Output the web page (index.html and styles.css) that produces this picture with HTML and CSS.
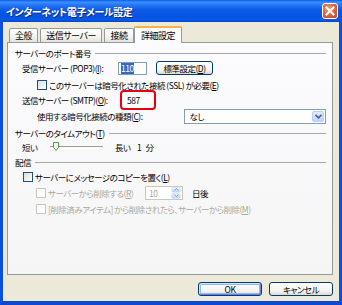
FILE: index.html
```html
<!DOCTYPE html>
<html lang="ja">
<head>
    <meta charset="UTF-8">
    <title>インターネット電子メール設定</title>
    <link rel="stylesheet" href="styles.css">
</head>
<body>
    <div class="window">
        <div class="titlebar">
            <span class="title">インターネット電子メール設定</span>
            <span class="close">
                <svg width="10" height="10" viewBox="0 0 10 10"><path d="M1.5 1.5 L8.5 8.5 M8.5 1.5 L1.5 8.5" stroke="#fff" stroke-width="2" stroke-linecap="square"/></svg>
            </span>
        </div>
        <div class="frame">
            <div class="tabs">
                <div class="tab t1">全般</div>
                <div class="tab t2">送信サーバー</div>
                <div class="tab t3">接続</div>
                <div class="tab t4 active">詳細設定</div>
            </div>
            <div class="panel">
                <div class="group-head"><span>サーバーのポート番号</span></div>
                <div class="row pop3">
                    <span class="label port">受信サーバー (POP3)(<u>I</u>):</span>
                    <span class="field port-field"><span class="selected">110</span></span>
                    <span class="btn std">標準設定(<u>D</u>)</span>
                </div>
                <div class="row ssl">
                    <span class="check"></span>
                    <span>このサーバーは暗号化された接続 (SSL) が必要(<u>E</u>)</span>
                </div>
                <div class="row smtp">
                    <span class="label port">送信サーバー (SMTP)(<u>O</u>):</span>
                    <span class="mark"><span class="field smtp-field">587</span></span>
                </div>
                <div class="row enc">
                    <span class="label enc-label">使用する暗号化接続の種類(<u>C</u>):</span>
                    <span class="field select">
                        <span class="select-text">なし</span>
                        <span class="drop">
                            <svg width="7" height="5" viewBox="0 0 7 5"><path d="M0.5 0.8 L3.5 3.8 L6.5 0.8" fill="none" stroke="#4d6185" stroke-width="1.6"/></svg>
                        </span>
                    </span>
                </div>
                <div class="group-head head2"><span>サーバーのタイムアウト(<u>T</u>)</span></div>
                <div class="row timeout">
                    <span class="short">短い</span>
                    <span class="slider">
                        <span class="track"></span>
                        <svg class="thumb" width="6" height="9" viewBox="0 0 6 9"><path d="M0.5 0.5 H5.5 V5.5 L3 8.5 L0.5 5.5 Z" fill="#f4f4ee" stroke="#4aa34a"/></svg>
                    </span>
                    <span class="long">長い</span>
                    <span class="value">1 分</span>
                </div>
                <div class="group-head head3"><span>配信</span></div>
                <div class="row copy">
                    <span class="check"></span>
                    <span>サーバーにメッセージのコピーを置く(<u>L</u>)</span>
                </div>
                <div class="row delete disabled">
                    <span class="check"></span>
                    <span class="del-label">サーバーから削除する(<u>R</u>)</span>
                    <span class="field spin">
                        <span class="spin-text">10</span>
                        <span class="spin-btns">
                            <span class="spin-btn"><svg width="5" height="3" viewBox="0 0 5 3"><path d="M0.5 2.5 L2.5 0.5 L4.5 2.5" fill="none" stroke="#8ea4cc"/></svg></span>
                            <span class="spin-btn"><svg width="5" height="3" viewBox="0 0 5 3"><path d="M0.5 0.5 L2.5 2.5 L4.5 0.5" fill="none" stroke="#8ea4cc"/></svg></span>
                        </span>
                    </span>
                    <span class="days">日後</span>
                </div>
                <div class="row deleted disabled">
                    <span class="check"></span>
                    <span>[削除済みアイテム] から削除されたら、サーバーから削除(<u>M</u>)</span>
                </div>
            </div>
            <div class="actions">
                <span class="btn ok">OK</span>
                <span class="btn">キャンセル</span>
            </div>
        </div>
    </div>
</body>
</html>
```

FILE: styles.css
```css
body {
    margin: 0;
    font-family: "Noto Sans CJK JP", sans-serif;
    font-size: 8.5px;
    letter-spacing: -0.5px;
    font-feature-settings: "palt";
    color: #000;
}

.window {
    width: 342px;
    height: 305px;
    display: flex;
    flex-direction: column;
}

.titlebar {
    height: 22px;
    flex: none;
    display: flex;
    align-items: center;
    padding: 0 4px 0 6px;
    background: linear-gradient(to bottom, #0a5ee8 0%, #3d8fff 10%, #2a7af6 20%, #0b5ae6 45%, #0553e0 75%, #0a58e8 90%, #0046c8 100%);
}

.title {
    flex: 1;
    color: #fff;
    font-weight: bold;
    font-size: 10px;
    letter-spacing: -0.4px;
    text-shadow: 1px 1px #0c2a8c;
}

.close {
    width: 14px;
    height: 14px;
    border: 1px solid #fff;
    border-radius: 3px;
    background: radial-gradient(circle at 40% 35%, #f0a080 0%, #e0643c 50%, #c2401c 100%);
    display: flex;
    align-items: center;
    justify-content: center;
}

.frame {
    flex: 1;
    display: flex;
    flex-direction: column;
    background: #ece9d8;
    border-left: 3px solid #0b50dc;
    border-right: 3px solid #0b50dc;
    border-bottom: 4px solid #0b4ad0;
    padding: 4px 6px 5px 4px;
}

.tabs {
    height: 16px;
    display: flex;
    align-items: flex-end;
    gap: 2px;
    padding-left: 2px;
    font-size: 9px;
}

.tab {
    height: 14px;
    box-sizing: border-box;
    border: 1px solid #919b9c;
    border-bottom: none;
    border-radius: 2px 2px 0 0;
    background: linear-gradient(to bottom, #ffffff, #f3f3ef 60%, #e4e3dc);
    display: flex;
    align-items: center;
    justify-content: center;
}

.t1 { width: 29px; }
.t2 { width: 62px; }
.t3 { width: 30px; }

.tab.active {
    width: 48px;
    height: 17px;
    margin-left: -2px;
    margin-bottom: -1px;
    border-top: 2px solid #f7b445;
    background: #fcfcfe;
    position: relative;
    z-index: 1;
}

.panel {
    height: 233px;
    box-sizing: border-box;
    border: 1px solid #919b9c;
    background: linear-gradient(to bottom, #fcfcfe, #f5f5f6);
    padding: 4px 6px 0 7px;
}

.group-head {
    height: 12px;
    display: flex;
    align-items: center;
    gap: 4px;
}

.group-head::after {
    content: "";
    flex: 1;
    border-top: 1px solid #a8a8a4;
}

.head2 { margin-top: 3px; }
.head3 { margin-top: 2px; }

.row {
    display: flex;
    align-items: center;
    white-space: nowrap;
}

.pop3 { height: 16px; margin-top: 1px; padding-left: 7px; }
.ssl { height: 15px; margin-top: 1px; padding-left: 22px; }
.smtp { height: 15px; padding-left: 7px; }
.enc { height: 16px; margin-top: 1px; padding-left: 22px; }
.timeout { height: 14px; margin-top: 1px; padding-left: 7px; }
.copy { height: 16px; margin-top: 1px; padding-left: 8px; }
.delete { height: 15px; padding-left: 21px; }
.deleted { height: 14px; margin-top: 2px; padding-left: 21px; }

.disabled { color: #aca899; }

.label.port { width: 96px; }
.enc-label { width: 148px; }

.field {
    box-sizing: border-box;
    background: #fff;
    border: 1px solid #7f9db9;
    display: flex;
    align-items: center;
}

.port-field {
    width: 29px;
    height: 13px;
    padding-left: 2px;
}

.selected {
    background: #316ac5;
    color: #fff;
    line-height: 11px;
}

.btn {
    box-sizing: border-box;
    border: 1px solid #003c74;
    border-radius: 3px;
    background: linear-gradient(to bottom, #ffffff, #f3f2ee 70%, #dcd8cc);
    display: flex;
    align-items: center;
    justify-content: center;
}

.std {
    width: 57px;
    height: 14px;
    margin-left: 9px;
}

.check {
    width: 10px;
    height: 10px;
    box-sizing: border-box;
    border: 1px solid #1c5180;
    background: linear-gradient(135deg, #dcdcd7, #ffffff);
    margin-right: 2px;
    flex: none;
}

.disabled .check {
    border-color: #cac8bb;
    background: #fff;
}

.mark {
    margin-left: 2px;
    padding: 2px;
    border: 2px solid #e8000e;
    border-radius: 4px;
}

.smtp-field {
    width: 28px;
    height: 12px;
    padding-left: 2px;
    border-color: #fff;
}

.select {
    width: 142px;
    height: 15px;
    justify-content: space-between;
    padding: 1px 1px 1px 4px;
}

.drop, .spin-btn {
    box-sizing: border-box;
    border: 1px solid #b9cdf5;
    border-radius: 2px;
    background: linear-gradient(to bottom, #e2ebfe, #c1d3fb);
    display: flex;
    align-items: center;
    justify-content: center;
}

.drop {
    width: 12px;
    height: 11px;
}

.short { width: 28px; }

.slider {
    width: 53px;
    height: 12px;
    margin-right: 12px;
    position: relative;
}

.track {
    display: block;
    margin-top: 5px;
    height: 1px;
    border-top: 1px solid #9d9d92;
    border-bottom: 1px solid #fff;
}

.thumb {
    position: absolute;
    left: 3px;
    top: 1px;
}

.long { width: 22px; }

.value { word-spacing: 3px; }

.del-label { width: 97px; }

.spin {
    width: 38px;
    height: 14px;
    border-color: #c9c7ba;
    justify-content: space-between;
    padding: 1px 1px 1px 3px;
}

.spin-btns {
    display: flex;
    flex-direction: column;
}

.spin-btn {
    width: 10px;
    height: 6px;
    border-color: #e1e8f8;
}

.days { margin-left: 9px; color: #000; }

.actions {
    margin-top: 7px;
    display: flex;
    justify-content: flex-end;
    gap: 7px;
}

.actions .btn {
    width: 64px;
    height: 14px;
}

.btn.ok {
    box-shadow: inset 1px 1px #cee7ff, inset -1px -1px #6982ee, inset 0 0 0 2px #97b6ec;
}
```
